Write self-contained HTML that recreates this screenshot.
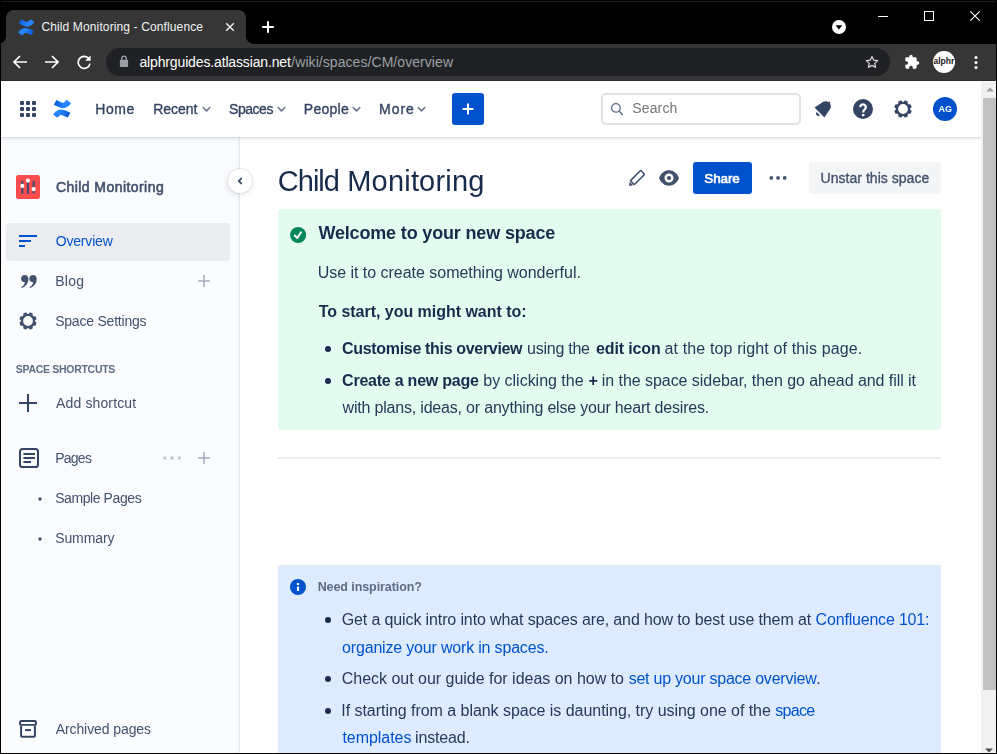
<!DOCTYPE html>
<html lang="en">
<head>
<meta charset="utf-8">
<title>Child Monitoring - Confluence</title>
<style>
*{box-sizing:border-box;margin:0;padding:0}
html,body{width:997px;height:754px;overflow:hidden;background:#fff}
body{font-family:"Liberation Sans",sans-serif;color:#172b4d;position:relative}
.abs,.t{position:absolute}
.t{white-space:nowrap;line-height:20px}
.g{will-change:opacity}
svg{position:absolute;overflow:visible}
b{font-weight:700}

/* ---------- browser chrome ---------- */
#titlebar{left:0;top:0;width:997px;height:44px;background:#000}
#topline{left:1px;top:1px;width:995px;height:1px;background:#1c1c1c}
#tab{left:6px;top:10px;width:240px;height:34px;background:#363636;border-radius:8px 8px 0 0}
#tabl{left:-2px;top:36px;width:8px;height:8px;background:radial-gradient(circle at 0 0,rgba(0,0,0,0) 7.500px,#363636 8.500px)}
#tabr{left:246px;top:36px;width:8px;height:8px;background:radial-gradient(circle at 100% 0,rgba(0,0,0,0) 7.500px,#363636 8.500px)}
#toolbar{left:0;top:44px;width:997px;height:37px;background:#363636;border-bottom:1px solid #2c2c2c}
#omni{left:106px;top:48px;width:784px;height:28px;border-radius:14px;background:#202124}
#tabtitle{left:42px;top:17px;font-size:12px;color:#f1f3f4;letter-spacing:0.1px}
#url{left:140px;top:52px;font-size:14px;color:#9aa0a6}
#url span{color:#fff}

/* ---------- window borders ---------- */
#bl{left:0;top:44px;width:1px;height:710px;background:#000}
#br{left:996px;top:44px;width:1px;height:710px;background:#000}
#bb{left:0;top:753px;width:997px;height:1px;background:#000}

/* ---------- page ---------- */
#page{left:1px;top:81px;width:980px;height:673px;background:#fff;overflow:hidden}
#scroll{left:981px;top:82px;width:15px;height:671px;background:#f1f1f1}
#thumb{left:983px;top:98px;width:13px;height:592px;background:#c1c1c1}
#nav{left:1px;top:81px;width:980px;height:56px;background:#fff}
#navshadow{left:1px;top:137px;width:980px;height:4px;background:linear-gradient(180deg,rgba(9,30,66,.13) 0,rgba(9,30,66,.13) 1px,rgba(9,30,66,.08) 1px,rgba(9,30,66,0) 4px)}
.nl{font-size:14px;color:#344563;font-weight:700;top:99px}
#create{left:452px;top:93px;width:32px;height:32px;border-radius:3px;background:#0052cc}
#search{left:601px;top:93px;width:200px;height:32px;border-radius:5px;border:2px solid #dfe1e6;background:#fff}
#searchtxt{left:633px;top:98px;font-size:14px;color:#6b778c}
#avatar{left:933px;top:97px;width:24px;height:24px;border-radius:50%;background:#0052cc;color:#fff;font-size:9px;font-weight:700;text-align:center;line-height:24px;letter-spacing:.3px}

/* ---------- sidebar ---------- */
#side{left:1px;top:137px;width:238px;height:616px;background:#fafbfc}
#sideborder{left:236px;top:137px;width:4px;height:616px;background:linear-gradient(90deg,rgba(9,30,66,0) 0,rgba(9,30,66,.03) 3px,rgba(9,30,66,.11) 3px,rgba(9,30,66,.11) 4px)}
#collapse{left:227.500px;top:169.300px;width:24px;height:24px;border-radius:50%;background:#fff;box-shadow:0 0 0 1px rgba(9,30,66,.08),0 2px 4px 1px rgba(9,30,66,.08)}
#spaceicon{left:16px;top:175px;width:24px;height:24px;border-radius:3px;background:#ff5630}
#sel{left:6px;top:223px;width:224px;height:38px;background:#ebecf0;border-radius:3px}
.sl{font-size:14px;color:#42526e;left:56px}
#shortcuts{left:16px;top:359px;font-size:11px;font-weight:700;color:#5e6c84}

/* ---------- main ---------- */
#h1{left:278px;top:161px;font-size:29px;line-height:40px;color:#172b4d;font-weight:400}
#share{left:693px;top:162px;width:59px;height:32px;border-radius:3px;background:#0052cc}
#sharetxt{left:704px;top:168px;font-size:14px;font-weight:700;color:#fff}
#unstar{left:809px;top:162px;width:132px;height:32px;border-radius:3px;background:#f4f5f7}
#unstartxt{left:822px;top:168px;font-size:14px;color:#42526e}
#green{left:278px;top:209px;width:663px;height:221px;border-radius:3px;background:#e3fcef}
#hr{left:278px;top:457px;width:663px;height:2px;background:#ebecf0}
#blue{left:278px;top:565px;width:663px;height:200px;border-radius:3px;background:#deebff}
.p{font-size:16px;color:#172b4d;line-height:24px}
.p b{color:#172b4d}
.lnk{color:#0052cc}
.dot{width:5px;height:5px;border-radius:50%;background:#172b4d}
</style>
</head>
<body>
<!-- browser chrome -->
<div class="abs" id="titlebar"></div>
<div class="abs" id="topline"></div>
<div class="abs" id="tab"></div><div class="abs" id="tabl"></div><div class="abs" id="tabr"></div>
<div class="abs" id="toolbar"></div>
<div class="abs" id="omni"></div>


<!-- chrome icons -->
<svg id="favicon" style="left:17.600px;top:18.800px" width="16.600" height="16.600" viewBox="5 4.700 18.200 18.200"><defs><linearGradient id="fg" gradientUnits="userSpaceOnUse" x1="5" y1="6" x2="16" y2="10"><stop offset="0" stop-color="#0052cc"/><stop offset="1" stop-color="#2684ff"/></linearGradient></defs><path d="M7.100 7.400C11 9.500 14 11.200 16.500 10.200C18.500 9.400 19.800 8 20.900 6.500" stroke="url(#fg)" stroke-width="5.500" fill="none"/><path d="M7.100 7.400C11 9.500 14 11.200 16.500 10.200C18.500 9.400 19.800 8 20.900 6.500" stroke="url(#fg)" stroke-width="5.500" fill="none" transform="rotate(180 14.100 13.800)"/></svg>
<svg style="left:225px;top:22px" width="10" height="10" viewBox="0 0 10 10"><path d="M1.2 1.2l7.6 7.6M8.800 1.200l-7.600 7.600" stroke="#e8eaed" stroke-width="1.500" fill="none"/></svg>
<svg style="left:262px;top:21px" width="12" height="12" viewBox="0 0 12 12"><path d="M6 .2v11.600M.200 6h11.600" stroke="#fff" stroke-width="2" fill="none"/></svg>
<svg style="left:832px;top:20px" width="14" height="14" viewBox="0 0 14 14"><circle cx="7" cy="7" r="7" fill="#fff"/><path d="M3.600 5.200h6.800L7 9.600z" fill="#000"/></svg>
<svg style="left:878px;top:16px" width="10" height="1" viewBox="0 0 10 1"><rect width="10" height="1" fill="#fff"/></svg>
<svg style="left:924px;top:11px" width="10" height="10" viewBox="0 0 10 10"><rect x=".5" y=".5" width="9" height="9" fill="none" stroke="#fff"/></svg>
<svg style="left:970px;top:11px" width="10" height="10" viewBox="0 0 10 10"><path d="M.3.300l9.400 9.400M9.700.300L.300 9.700" stroke="#fff" stroke-width="1.100" fill="none"/></svg>
<svg style="left:12px;top:54px" width="16" height="16" viewBox="0 0 16 16"><path d="M15 8H2.500M8 2L2 8l6 6" stroke="#fff" stroke-width="1.700" fill="none"/></svg>
<svg style="left:44px;top:54px" width="16" height="16" viewBox="0 0 16 16"><path d="M1 8h12.500M8 2l6 6-6 6" stroke="#fff" stroke-width="1.700" fill="none"/></svg>
<svg style="left:76px;top:54px" width="16" height="16" viewBox="0 0 16 16"><path d="M13.200 5.200A6 6 0 1 0 14 9.600" stroke="#fff" stroke-width="1.700" fill="none"/><path d="M14.600 1.400v5.400H9.200z" fill="#fff"/></svg>
<svg style="left:119px;top:55px" width="10" height="13" viewBox="0 0 10 13"><path d="M2.800 5V3.400a2.200 2.200 0 0 1 4.400 0V5" stroke="#9aa0a6" stroke-width="1.300" fill="none"/><rect x=".9" y="4.700" width="8.200" height="7.300" rx=".8" fill="#9aa0a6"/></svg>
<svg style="left:865px;top:55px" width="14" height="14" viewBox="0 0 24 24"><path d="M12 2.600l2.900 6.300 6.900.800-5.100 4.700 1.400 6.800L12 17.800l-6.100 3.400 1.400-6.800-5.100-4.700 6.900-.800z" stroke="#dadce0" stroke-width="2" fill="none" stroke-linejoin="round"/></svg>
<svg style="left:904px;top:54px" width="16" height="16" viewBox="0 0 24 24"><path d="M20.500 11H19V7a2 2 0 0 0-2-2h-4V3.500a2.500 2.500 0 0 0-5 0V5H4a2 2 0 0 0-2 2v3.800h1.500a2.700 2.700 0 0 1 0 5.400H2V20a2 2 0 0 0 2 2h3.800v-1.500a2.700 2.700 0 0 1 5.400 0V22H17a2 2 0 0 0 2-2v-4h1.500a2.500 2.500 0 0 0 0-5z" fill="#fff"/></svg>
<div class="abs" style="left:933px;top:50.600px;width:22.300px;height:22.300px;border-radius:50%;background:#fff"></div>
<svg style="left:974px;top:55px" width="4" height="15" viewBox="0 0 4 15"><circle cx="2" cy="2.500" r="1.500" fill="#fff"/><circle cx="2" cy="7.500" r="1.500" fill="#fff"/><circle cx="2" cy="12.500" r="1.500" fill="#fff"/></svg>

<!-- page -->
<div class="abs" id="page"></div>
<div class="abs" id="side"></div>
<div class="abs" id="sideborder"></div>
<div class="abs" id="nav"></div>
<div class="abs" id="navshadow"></div>
<div class="abs" id="scroll"></div>
<div class="abs" id="thumb"></div>

<!-- nav -->
<div class="abs" id="create"></div>
<div class="abs" id="search"></div>
<div class="abs" id="avatar"></div>


<!-- nav icons -->
<svg style="left:20px;top:101px" width="16" height="16" viewBox="0 0 16 16" fill="#344563"><rect x="0" y="0" width="4" height="4" rx="1"/><rect x="6" y="0" width="4" height="4" rx="1"/><rect x="12" y="0" width="4" height="4" rx="1"/><rect x="0" y="6" width="4" height="4" rx="1"/><rect x="6" y="6" width="4" height="4" rx="1"/><rect x="12" y="6" width="4" height="4" rx="1"/><rect x="0" y="12" width="4" height="4" rx="1"/><rect x="6" y="12" width="4" height="4" rx="1"/><rect x="12" y="12" width="4" height="4" rx="1"/></svg>
<svg id="logo" style="left:48px;top:95px" width="28" height="28" viewBox="0 0 28 28"><defs><linearGradient id="lg" gradientUnits="userSpaceOnUse" x1="5" y1="6" x2="16" y2="10"><stop offset="0" stop-color="#0052cc"/><stop offset="1" stop-color="#2684ff"/></linearGradient></defs><path d="M7.100 7.400C11 9.500 14 11.200 16.500 10.200C18.500 9.400 19.800 8 20.900 6.500" stroke="url(#lg)" stroke-width="5.500" fill="none"/><path d="M7.100 7.400C11 9.500 14 11.200 16.500 10.200C18.500 9.400 19.800 8 20.900 6.500" stroke="url(#lg)" stroke-width="5.500" fill="none" transform="rotate(180 14.100 13.800)"/></svg>

<svg style="left:201.6px;top:106px" width="9" height="7" viewBox="0 0 9 7"><path d="M1.200 1.500L4.500 4.900 7.800 1.500" stroke="#6b778c" stroke-width="1.600" fill="none" stroke-linecap="round" stroke-linejoin="round"/></svg><svg style="left:276.5px;top:106px" width="9" height="7" viewBox="0 0 9 7"><path d="M1.200 1.500L4.500 4.900 7.800 1.500" stroke="#6b778c" stroke-width="1.600" fill="none" stroke-linecap="round" stroke-linejoin="round"/></svg><svg style="left:351.5px;top:106px" width="9" height="7" viewBox="0 0 9 7"><path d="M1.200 1.500L4.500 4.900 7.800 1.500" stroke="#6b778c" stroke-width="1.600" fill="none" stroke-linecap="round" stroke-linejoin="round"/></svg><svg style="left:417.2px;top:106px" width="9" height="7" viewBox="0 0 9 7"><path d="M1.200 1.500L4.500 4.900 7.800 1.500" stroke="#6b778c" stroke-width="1.600" fill="none" stroke-linecap="round" stroke-linejoin="round"/></svg>
<svg style="left:462px;top:103px" width="12" height="12" viewBox="0 0 12 12"><path d="M6 .5v11M.500 6h11" stroke="#fff" stroke-width="2" fill="none"/></svg>
<svg style="left:610px;top:102px" width="14" height="14" viewBox="0 0 14 14"><circle cx="5.900" cy="5.900" r="4.300" stroke="#5e6c84" stroke-width="1.300" fill="none"/><path d="M9.100 9.100l3.200 3.400" stroke="#5e6c84" stroke-width="1.500" stroke-linecap="round"/></svg>
<svg style="left:813px;top:97px" width="24" height="24" viewBox="-12 -12 24 24"><g transform="translate(-1.500 -.5) rotate(45) scale(1.050)" fill="#344563"><path d="M-6.700 5.400L6.700 5.400L5.200 -1.500C5.200 -5.500 3 -7.800 0 -7.800C-3 -7.800 -5.200 -5.500 -5.200 -1.500Z"/><circle cx="0" cy="-7.800" r="1"/><path d="M-2.200 7A2.200 2.200 0 0 0 2.200 7Z"/></g></svg>
<svg style="left:853px;top:99px" width="20" height="20" viewBox="-10 -10 20 20"><circle r="10" fill="#344563"/><path d="M-2.800 -1.900A2.800 2.800 0 1 1 1.700 .4C.6 1.100 .2 1.800 .2 3.500" stroke="#fff" stroke-width="2.200" fill="none"/><rect x="-1" y="5" width="2.400" height="2.200" fill="#fff"/></svg>
<svg style="left:893px;top:99px" width="20" height="20" viewBox="-10 -10 20 20"><g fill="#344563"><rect x="-1.900" y="-8.800" width="3.800" height="3.200" rx="1" transform="rotate(22.5)"/><rect x="-1.900" y="-8.800" width="3.800" height="3.200" rx="1" transform="rotate(67.5)"/><rect x="-1.900" y="-8.800" width="3.800" height="3.200" rx="1" transform="rotate(112.5)"/><rect x="-1.900" y="-8.800" width="3.800" height="3.200" rx="1" transform="rotate(157.5)"/><rect x="-1.900" y="-8.800" width="3.800" height="3.200" rx="1" transform="rotate(202.5)"/><rect x="-1.900" y="-8.800" width="3.800" height="3.200" rx="1" transform="rotate(247.5)"/><rect x="-1.900" y="-8.800" width="3.800" height="3.200" rx="1" transform="rotate(292.5)"/><rect x="-1.900" y="-8.800" width="3.800" height="3.200" rx="1" transform="rotate(337.5)"/></g><circle r="6.100" fill="none" stroke="#344563" stroke-width="2.400"/></svg>

<!-- sidebar -->
<div class="abs" id="spaceicon"></div>
<div class="abs" id="sel"></div>
<div class="abs" id="collapse"></div>

<!-- sidebar icons -->
<svg style="left:16px;top:175px" width="24" height="24" viewBox="0 0 24 24"><rect width="24" height="24" rx="3.500" fill="#fe4c4c"/><path d="M6.300 5.700v13.300M11.900 7.300v11.700M17.600 5.700v12.800" stroke="#3b4a75" stroke-width="2" fill="none"/><circle cx="6.300" cy="10.900" r="2.100" fill="#fff"/><circle cx="11.900" cy="5.600" r="2.100" fill="#fff"/><circle cx="17.600" cy="14.100" r="2.100" fill="#fff"/></svg>
<svg style="left:234.800px;top:176.400px" width="10" height="10" viewBox="0 0 10 10"><path d="M6.300 2.500L3.700 5 6.300 7.500" stroke="#42526e" stroke-width="1.800" fill="none" stroke-linecap="round" stroke-linejoin="round"/></svg>
<svg style="left:19px;top:235px" width="18" height="12" viewBox="0 0 18 12"><path d="M0 1h18M0 6h12M0 11h6" stroke="#0052cc" stroke-width="2" fill="none"/></svg>
<svg style="left:20.700px;top:274.700px" width="16" height="13" viewBox="0 0 16 13" fill="#42526e"><path d="M3.700 0C5.900 0 7.400 1.600 7.400 4C7.400 8.500 4.500 11.800 .600 13L.200 12.300C2.300 11.200 3.600 9.500 3.900 7.300C1.700 7.400 0 5.900 0 3.700C0 1.600 1.600 0 3.700 0Z"/><path d="M3.700 0C5.900 0 7.400 1.600 7.400 4C7.400 8.500 4.500 11.800 .600 13L.200 12.300C2.300 11.200 3.600 9.500 3.900 7.300C1.700 7.400 0 5.900 0 3.700C0 1.600 1.600 0 3.700 0Z" transform="translate(8.300 0)"/></svg>
<svg style="left:198px;top:275.200px" width="12" height="12" viewBox="0 0 12 12"><path d="M6 0v12M0 6h12" stroke="#a5adba" stroke-width="1.500" fill="none"/></svg>
<svg style="left:17.600px;top:310.500px" width="20" height="20" viewBox="-10 -10 20 20"><g fill="#42526e"><rect x="-1.900" y="-8.700" width="3.800" height="3.200" rx="1" transform="rotate(22.5)"/><rect x="-1.900" y="-8.700" width="3.800" height="3.200" rx="1" transform="rotate(67.5)"/><rect x="-1.900" y="-8.700" width="3.800" height="3.200" rx="1" transform="rotate(112.5)"/><rect x="-1.900" y="-8.700" width="3.800" height="3.200" rx="1" transform="rotate(157.5)"/><rect x="-1.900" y="-8.700" width="3.800" height="3.200" rx="1" transform="rotate(202.5)"/><rect x="-1.900" y="-8.700" width="3.800" height="3.200" rx="1" transform="rotate(247.5)"/><rect x="-1.900" y="-8.700" width="3.800" height="3.200" rx="1" transform="rotate(292.5)"/><rect x="-1.900" y="-8.700" width="3.800" height="3.200" rx="1" transform="rotate(337.5)"/></g><circle r="6.100" fill="none" stroke="#42526e" stroke-width="2.400"/></svg>
<svg style="left:19px;top:393.500px" width="18" height="18" viewBox="0 0 18 18"><path d="M9 0v18M0 9h18" stroke="#344563" stroke-width="2" fill="none"/></svg>
<svg style="left:18.500px;top:448px" width="20" height="20" viewBox="0 0 20 20"><rect x="1" y="1" width="18" height="18" rx="2.600" fill="none" stroke="#344563" stroke-width="2"/><path d="M4.400 6h11.600M4.400 10h11.600M4.400 13.900h7.600" stroke="#344563" stroke-width="2" fill="none"/></svg>
<svg style="left:163px;top:456px" width="18" height="4" viewBox="0 0 18 4" fill="#c1c7d0"><circle cx="1.800" cy="2" r="1.800"/><circle cx="9" cy="2" r="1.800"/><circle cx="16.300" cy="2" r="1.800"/></svg>
<svg style="left:198px;top:452px" width="12" height="12" viewBox="0 0 12 12"><path d="M6 0v12M0 6h12" stroke="#a5adba" stroke-width="1.500" fill="none"/></svg>
<svg style="left:38px;top:497px" width="4" height="4" viewBox="0 0 4 4"><circle cx="2" cy="2" r="1.700" fill="#42526e"/></svg>
<svg style="left:38px;top:537px" width="4" height="4" viewBox="0 0 4 4"><circle cx="2" cy="2" r="1.700" fill="#42526e"/></svg>
<svg style="left:19px;top:720px" width="18" height="18" viewBox="0 0 18 18"><rect x="1.100" y="1" width="15.800" height="3.900" rx="1.200" fill="#fff" stroke="#344563" stroke-width="2"/><path d="M2.100 5.800v10a1 1 0 0 0 1 1h11.800a1 1 0 0 0 1-1v-10" fill="#fff" stroke="#344563" stroke-width="2"/><path d="M6.100 10.100h5.900" stroke="#344563" stroke-width="2"/></svg>

<!-- main -->
<div class="abs" id="share"></div><div class="abs" id="unstar"></div><div class="abs" id="green"></div>
<div class="abs" id="hr"></div>
<div class="abs" id="blue"></div>

<!-- main icons -->
<svg style="left:629px;top:185.800px" width="1" height="1" viewBox="0 0 1 1"><g transform="rotate(-45)"><path d="M0 0L3.400 -2.500L3.400 2.500Z" fill="#42526e"/><rect x="4.700" y="-2.800" width="14.600" height="5.600" rx=".9" fill="none" stroke="#42526e" stroke-width="1.600"/></g></svg>
<svg style="left:659px;top:170px" width="20" height="16" viewBox="-10 -8 20 16"><path d="M-10 0C-8 -5.200 -4 -7.700 0 -7.700C4 -7.700 8 -5.200 10 0C8 5.200 4 7.700 0 7.700C-4 7.700 -8 5.200 -10 0Z" fill="#42526e"/><circle r="3.300" fill="none" stroke="#fff" stroke-width="2.400"/></svg>
<svg style="left:769px;top:176px" width="18" height="4" viewBox="0 0 18 4" fill="#42526e"><circle cx="2.300" cy="1.900" r="1.850"/><circle cx="9" cy="1.900" r="1.850"/><circle cx="15.700" cy="1.900" r="1.850"/></svg>
<svg style="left:290px;top:227px" width="16" height="16" viewBox="0 0 16 16"><circle cx="8.100" cy="8" r="8" fill="#00875a"/><path d="M4.700 8.500L7.300 11 11 5.300" stroke="#fff" stroke-width="2" fill="none" stroke-linecap="round" stroke-linejoin="round"/></svg>
<svg style="left:290px;top:579px" width="16" height="16" viewBox="0 0 16 16"><circle cx="8" cy="8" r="8" fill="#0052cc"/><rect x="6.900" y="4" width="2.200" height="2" rx=".5" fill="#fff"/><rect x="6.900" y="7.600" width="2.200" height="4.400" rx=".4" fill="#fff"/></svg>
<svg style="left:325px;top:346px" width="6" height="6" viewBox="0 0 6 6"><circle cx="3" cy="3" r="3" fill="#172b4d"/></svg>
<svg style="left:325px;top:378px" width="6" height="6" viewBox="0 0 6 6"><circle cx="3" cy="3" r="3" fill="#172b4d"/></svg>
<svg style="left:325px;top:617px" width="6" height="6" viewBox="0 0 6 6"><circle cx="3" cy="3" r="3" fill="#172b4d"/></svg>
<svg style="left:325px;top:676px" width="6" height="6" viewBox="0 0 6 6"><circle cx="3" cy="3" r="3" fill="#172b4d"/></svg>
<svg style="left:325px;top:708px" width="6" height="6" viewBox="0 0 6 6"><circle cx="3" cy="3" r="3" fill="#172b4d"/></svg>
<svg style="left:985.500px;top:87.300px" width="8" height="5" viewBox="0 0 8 5"><path d="M0 4.500L4 .5 8 4.500Z" fill="#a3a3a3"/></svg>
<svg style="left:985px;top:748px" width="8" height="5" viewBox="0 0 8 5"><path d="M0 .5L4 4.500 8 .5Z" fill="#505050"/></svg>

<!-- texts -->
<div class="t" id="t-tabtitle" style="left:41.44px;top:17.00px;font-size:12px;font-weight:400;letter-spacing:0.125px;color:#f1f3f4">Child Monitoring - Confluence</div>
<div class="t" id="t-url1" style="left:139.44px;top:52.00px;font-size:14px;font-weight:400;letter-spacing:-0.143px;color:#ffffff">alphrguides.atlassian.net</div>
<div class="t" id="t-url2" style="left:291.32px;top:52.00px;font-size:14px;font-weight:400;letter-spacing:0.062px;color:#9aa0a6">/wiki/spaces/CM/overview</div>
<div class="t" id="t-alphr" style="left:933.44px;top:51.00px;font-size:8.5px;font-weight:700;letter-spacing:0.027px;color:#1a1a1a">alphr</div>
<div class="t g" id="t-home" style="left:95.35px;top:99.00px;font-size:14px;font-weight:400;-webkit-text-stroke:.35px currentColor;letter-spacing:0.546px;color:#344563">Home</div>
<div class="t g" id="t-recent" style="left:153.25px;top:99.00px;font-size:14px;font-weight:400;-webkit-text-stroke:.35px currentColor;letter-spacing:-0.021px;color:#344563">Recent</div>
<div class="t g" id="t-spaces" style="left:229.00px;top:99.00px;font-size:14px;font-weight:400;-webkit-text-stroke:.35px currentColor;letter-spacing:-0.455px;color:#344563">Spaces</div>
<div class="t g" id="t-people" style="left:303.85px;top:99.00px;font-size:14px;font-weight:400;-webkit-text-stroke:.35px currentColor;letter-spacing:0.250px;color:#344563">People</div>
<div class="t g" id="t-more" style="left:379.05px;top:99.00px;font-size:14px;font-weight:400;-webkit-text-stroke:.35px currentColor;letter-spacing:0.949px;color:#344563">More</div>
<div class="t g" id="t-search" style="left:632.16px;top:98.00px;font-size:14px;font-weight:400;letter-spacing:0.175px;color:#757575">Search</div>
<div class="t g" id="t-ag" style="left:938.55px;top:99.00px;font-size:9px;font-weight:700;letter-spacing:-0.106px;color:#ffffff">AG</div>
<div class="t g" id="t-cm" style="left:55.93px;top:177.00px;font-size:14px;font-weight:400;-webkit-text-stroke:.6px currentColor;letter-spacing:0.439px;color:#42526e">Child Monitoring</div>
<div class="t g" id="t-overview" style="left:55.71px;top:231.00px;font-size:14px;font-weight:400;letter-spacing:-0.181px;color:#0052cc">Overview</div>
<div class="t g" id="t-blog" style="left:55.15px;top:271.00px;font-size:14px;font-weight:400;letter-spacing:0.280px;color:#42526e">Blog</div>
<div class="t g" id="t-ss" style="left:55.16px;top:311.00px;font-size:14px;font-weight:400;letter-spacing:-0.216px;color:#42526e">Space Settings</div>
<div class="t g" id="t-shortcuts" style="left:15.80px;top:359.00px;font-size:10.5px;font-weight:700;letter-spacing:-0.297px;color:#5e6c84">SPACE SHORTCUTS</div>
<div class="t g" id="t-addsc" style="left:56.08px;top:393.00px;font-size:14px;font-weight:400;letter-spacing:0.130px;color:#42526e">Add shortcut</div>
<div class="t g" id="t-pages" style="left:55.15px;top:448.00px;font-size:14px;font-weight:400;letter-spacing:-0.731px;color:#42526e">Pages</div>
<div class="t g" id="t-sample" style="left:55.16px;top:488.00px;font-size:14px;font-weight:400;letter-spacing:-0.416px;color:#42526e">Sample Pages</div>
<div class="t g" id="t-summary" style="left:55.16px;top:528.00px;font-size:14px;font-weight:400;letter-spacing:-0.098px;color:#42526e">Summary</div>
<div class="t g" id="t-archived" style="left:55.68px;top:719.00px;font-size:14px;font-weight:400;letter-spacing:-0.085px;color:#42526e">Archived pages</div>
<div class="t g" id="t-h1a" style="left:277.87px;top:171.00px;font-size:29px;font-weight:400;letter-spacing:-1.006px;color:#172b4d">Child</div>
<div class="t g" id="t-h1b" style="left:347.28px;top:171.00px;font-size:29px;font-weight:400;letter-spacing:0.189px;color:#172b4d">Monitoring</div>
<div class="t g" id="t-share" style="left:704.30px;top:168.50px;font-size:13.5px;font-weight:400;-webkit-text-stroke:.6px currentColor;letter-spacing:-0.115px;color:#ffffff">Share</div>
<div class="t g" id="t-unstar" style="left:820.57px;top:168.00px;font-size:14px;font-weight:400;-webkit-text-stroke:.35px currentColor;letter-spacing:0.030px;color:#42526e">Unstar this space</div>
<div class="t g" id="t-welcome" style="left:318.38px;top:223.00px;font-size:18px;font-weight:700;letter-spacing:-0.160px;color:#172b4d">Welcome to your new space</div>
<div class="t g" id="t-useit" style="left:317.70px;top:262.50px;font-size:16px;font-weight:400;letter-spacing:-0.026px;color:#27395a">Use it to create something wonderful.</div>
<div class="t g" id="t-tostart" style="left:318.73px;top:301.50px;font-size:16px;font-weight:700;letter-spacing:-0.028px;color:#172b4d">To start, you might want to:</div>
<div class="t g" id="t-c1" style="left:342.11px;top:338.50px;font-size:16px;font-weight:700;letter-spacing:-0.327px;color:#172b4d">Customise this overview</div>
<div class="t g" id="t-c2" style="left:527.02px;top:338.50px;font-size:16px;font-weight:400;letter-spacing:-0.244px;color:#27395a">using the</div>
<div class="t g" id="t-c3" style="left:596.04px;top:338.50px;font-size:16px;font-weight:700;letter-spacing:-0.145px;color:#172b4d">edit icon</div>
<div class="t g" id="t-c4" style="left:664.58px;top:338.50px;font-size:16px;font-weight:400;letter-spacing:0.128px;color:#27395a">at the top right of this page.</div>
<div class="t g" id="t-d1" style="left:342.11px;top:370.50px;font-size:16px;font-weight:700;letter-spacing:-0.232px;color:#172b4d">Create a new page</div>
<div class="t g" id="t-d2" style="left:483.32px;top:370.50px;font-size:16px;font-weight:400;letter-spacing:-0.019px;color:#27395a">by clicking the</div>
<div class="t g" id="t-d3" style="left:588.62px;top:370.50px;font-size:16px;font-weight:700;letter-spacing:0.000px;color:#172b4d">+</div>
<div class="t g" id="t-d4" style="left:601.82px;top:370.50px;font-size:16px;font-weight:400;letter-spacing:-0.053px;color:#27395a">in the space sidebar, then go ahead and fill it</div>
<div class="t g" id="t-d5" style="left:342.58px;top:397.50px;font-size:16px;font-weight:400;letter-spacing:-0.193px;color:#27395a">with plans, ideas, or anything else your heart desires.</div>
<div class="t g" id="t-need" style="left:317.65px;top:577.00px;font-size:12.5px;font-weight:700;letter-spacing:-0.080px;color:#5e6c84">Need inspiration?</div>
<div class="t g" id="t-g1" style="left:341.72px;top:609.50px;font-size:16px;font-weight:400;letter-spacing:-0.124px;color:#27395a">Get a quick intro into what spaces are, and how to best use them at</div>
<div class="t g" id="t-g2" style="left:815.62px;top:609.50px;font-size:16px;font-weight:400;letter-spacing:-0.192px;color:#0052cc">Confluence 101:</div>
<div class="t g" id="t-g3" style="left:342.11px;top:637.50px;font-size:16px;font-weight:400;letter-spacing:-0.183px;color:#0052cc">organize your work in spaces.</div>
<div class="t g" id="t-k1" style="left:341.72px;top:668.50px;font-size:16px;font-weight:400;letter-spacing:-0.016px;color:#27395a">Check out our guide for ideas on how to</div>
<div class="t g" id="t-k2" style="left:628.66px;top:668.50px;font-size:16px;font-weight:400;letter-spacing:-0.233px;color:#0052cc">set up your space overview</div>
<div class="t g" id="t-k3" style="left:816.30px;top:668.50px;font-size:16px;font-weight:400;letter-spacing:0.000px;color:#27395a">.</div>
<div class="t g" id="t-i1" style="left:341.29px;top:700.50px;font-size:16px;font-weight:400;letter-spacing:-0.042px;color:#27395a">If starting from a blank space is daunting, try using one of the</div>
<div class="t g" id="t-i2" style="left:775.16px;top:700.50px;font-size:16px;font-weight:400;letter-spacing:-0.668px;color:#0052cc">space</div>
<div class="t g" id="t-i3" style="left:342.48px;top:727.50px;font-size:16px;font-weight:400;letter-spacing:-0.047px;color:#0052cc">templates</div>
<div class="t g" id="t-i4" style="left:415.12px;top:727.50px;font-size:16px;font-weight:400;letter-spacing:-0.182px;color:#27395a">instead.</div>
<!-- window borders -->
<div class="abs" id="bl"></div><div class="abs" id="br"></div><div class="abs" id="bb"></div>
</body>
</html>
